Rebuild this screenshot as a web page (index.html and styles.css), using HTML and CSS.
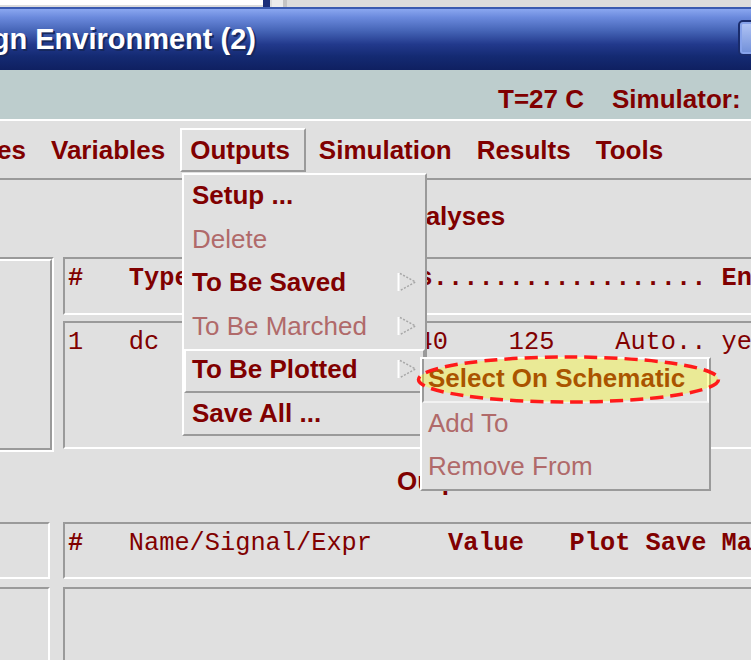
FILE: index.html
```html
<!DOCTYPE html>
<html>
<head>
<meta charset="utf-8">
<link rel="stylesheet" href="styles.css">
</head>
<body>
<div class="screen">
  <div class="topstrip">
    <div class="ts-white"></div>
    <div class="ts-navy"></div>
    <div class="ts-light"></div>
  </div>
  <div class="titlebar">
    <div class="title-wrap"><span class="title">Analog Design Environment (2)</span></div>
    <div class="tbtn"></div>
  </div>
  <div class="status">
    <span>T=27 C</span>
    <span class="sim">Simulator:  spectre</span>
  </div>
  <div class="menubar">
    <div class="mi-clip"><span class="mi">Session  Setup  Analyses</span></div>
    <span class="mi">Variables</span>
    <span class="mi active">Outputs</span>
    <span class="mi">Simulation</span>
    <span class="mi">Results</span>
    <span class="mi">Tools</span>
  </div>
  <div class="content">
    <div class="label label-analyses">Analyses</div>
    <div class="section section-a">
      <div class="side"><div class="side-inner"></div></div>
      <div class="tables">
        <div class="thead mono"><b>#   Type       Arguments.................. Enable</b></div>
        <div class="tbody tbody-a mono">1   dc                -40    125    Auto.. yes</div>
      </div>
    </div>
    <div class="label label-outputs">Outputs</div>
    <div class="section section-b">
      <div class="side-col">
        <div class="side2"></div>
        <div class="side2 side2-b"></div>
      </div>
      <div class="tables">
        <div class="thead thead-b mono"><b>#</b>   Name/Signal/Expr     <b>Value   Plot Save March</b></div>
        <div class="tbody tbody-b mono"></div>
      </div>
    </div>
  </div>

  <div class="dropdown">
    <div class="dd-item"><span class="dd-text">Setup ...</span></div>
    <div class="dd-item disabled"><span class="dd-text">Delete</span></div>
    <div class="dd-item"><span class="dd-text">To Be Saved</span>
      <svg class="arrow" width="20" height="20" viewBox="0 0 20 20"><path d="M1.5 1 V19" stroke="#ffffff" stroke-width="2"/><path d="M3 1.5 L18.5 10 L3 18.5" fill="none" stroke="#a6a6a6" stroke-width="1.5" stroke-dasharray="2 1.6"/></svg>
    </div>
    <div class="dd-item disabled"><span class="dd-text">To Be Marched</span>
      <svg class="arrow" width="20" height="20" viewBox="0 0 20 20"><path d="M1.5 1 V19" stroke="#ffffff" stroke-width="2"/><path d="M3 1.5 L18.5 10 L3 18.5" fill="none" stroke="#a6a6a6" stroke-width="1.5" stroke-dasharray="2 1.6"/></svg>
    </div>
    <div class="dd-item active"><span class="dd-text">To Be Plotted</span>
      <svg class="arrow" width="20" height="20" viewBox="0 0 20 20"><path d="M1.5 1 V19" stroke="#ffffff" stroke-width="2"/><path d="M3 1.5 L18.5 10 L3 18.5" fill="none" stroke="#a6a6a6" stroke-width="1.5" stroke-dasharray="2 1.6"/></svg>
    </div>
    <div class="dd-item"><span class="dd-text">Save All ...</span></div>
  </div>

  <div class="submenu">
    <div class="sm-item active"><span class="dd-text">Select On Schematic</span></div>
    <div class="sm-item disabled"><span class="dd-text">Add To</span></div>
    <div class="sm-item disabled"><span class="dd-text">Remove From</span></div>
  </div>

  <svg class="annot" width="312" height="54" viewBox="0 0 312 54">
    <ellipse cx="154.5" cy="26.5" rx="150" ry="22.5" fill="rgba(255,255,0,0.33)" stroke="#ff1a1a" stroke-width="3.5" stroke-dasharray="13 7"/>
  </svg>
</div>
</body>
</html>
```

FILE: styles.css
```css
html, body {
  margin: 0;
  padding: 0;
}
body {
  width: 751px;
  height: 660px;
  overflow: hidden;
  background: #e0e0e0;
  font-family: "Liberation Sans", Arial, sans-serif;
  color: #800000;
}
.screen {
  position: relative;
  width: 751px;
  height: 660px;
  overflow: hidden;
}

/* top strip */
.topstrip {
  height: 7px;
  display: flex;
  background: #dcdcdc;
}
.ts-white {
  width: 263px;
  height: 5px;
  background: #ffffff;
}
.ts-navy {
  width: 7px;
  height: 7px;
  background: #1c2f7a;
}
.ts-light {
  width: 11px;
  height: 7px;
  margin-left: 2px;
  background: #ececec;
  border-right: 4px solid #c4c4c4;
}

/* title bar */
.titlebar {
  height: 61px;
  border-top: 2px solid #3a5ab0;
  background: linear-gradient(#8aa7f0 0%, #6a89dc 14%, #4564b6 36%, #22398c 58%, #142a72 78%, #0f2061 100%);
  display: flex;
  align-items: center;
  justify-content: space-between;
}
.title-wrap {
  width: 256px;
  display: flex;
  justify-content: flex-end;
  white-space: nowrap;
}
.title {
  color: #ffffff;
  font-weight: bold;
  font-size: 29px;
  line-height: 61px;
  text-shadow: 2px 2px 0 #16285e;
}
.tbtn {
  width: 14px;
  height: 32px;
  margin-right: -5px;
  margin-top: -3px;
  border: 2px solid #1a2c6c;
  border-radius: 5px;
  background: linear-gradient(#b3c6f6, #6f8ed8);
  box-shadow: inset 0 0 0 2px #86a2ea;
}

/* status band */
.status {
  height: 40px;
  padding-top: 9px;
  padding-left: 498px;
  background: #bdcdcd;
  border-bottom: 2px solid #ffffff;
  display: flex;
  gap: 28px;
  white-space: nowrap;
  font-weight: bold;
  font-size: 26px;
  line-height: 40px;
  color: #800000;
}
.sim {
  white-space: pre;
}

/* menu bar */
.menubar {
  height: 57px;
  display: flex;
  align-items: center;
  gap: 5px;
  border-bottom: 2px solid #9a9a9a;
  white-space: nowrap;
}
.mi-clip {
  width: 36px;
  flex: none;
  display: flex;
  justify-content: flex-end;
}
.mi {
  flex: none;
  padding: 0 8px;
  border: 2px solid transparent;
  line-height: 40px;
  font-weight: bold;
  font-size: 26px;
  color: #800000;
  white-space: pre;
}
.mi.active {
  padding-right: 14px;
  margin-right: -2px;
  border-color: #ffffff #9a9a9a #9a9a9a #ffffff;
}

/* content */
.label {
  font-weight: bold;
  font-size: 26px;
  line-height: 30px;
  color: #800000;
  white-space: nowrap;
}
.label-analyses {
  margin-top: 21px;
  padding-left: 391px;
}
.label-outputs {
  margin-top: 14px;
  padding-left: 397px;
}
.section {
  display: grid;
  margin-top: 26px;
}
.section-a {
  grid-template-columns: 54px 1fr;
  column-gap: 9px;
  height: 195px;
}
.section-b {
  grid-template-columns: 50px 1fr;
  column-gap: 13px;
}
.side {
  box-sizing: border-box;
  border-top: 2px solid #9a9a9a;
  border-right: 2px solid #ffffff;
  border-bottom: 2px solid #ffffff;
}
.side-inner {
  height: 100%;
  box-sizing: border-box;
  border-top: 2px solid #ffffff;
  border-right: 2px solid #9a9a9a;
  border-bottom: 2px solid #9a9a9a;
}
.side-col {
  display: flex;
  flex-direction: column;
}
.side2 {
  height: 57px;
  box-sizing: border-box;
  border-top: 2px solid #9a9a9a;
  border-right: 2px solid #ffffff;
  border-bottom: 2px solid #ffffff;
}
.side2-b {
  margin-top: 8px;
  height: 100px;
  border-bottom: none;
}
.tables {
  display: flex;
  flex-direction: column;
  min-width: 0;
}
.mono {
  font-family: "Liberation Mono", "Courier New", monospace;
  font-size: 25.33px;
  line-height: 29px;
  white-space: pre;
  color: #800000;
  overflow: hidden;
}
.thead, .tbody {
  box-sizing: border-box;
  border-top: 2px solid #9a9a9a;
  border-left: 2px solid #9a9a9a;
  border-bottom: 2px solid #ffffff;
  padding: 5px 0 0 3px;
}
.thead {
  height: 58px;
}
.tbody-a {
  margin-top: 6px;
  height: 128px;
}
.thead-b {
  height: 57px;
  padding-top: 5px;
}
.tbody-b {
  margin-top: 8px;
  height: 100px;
  border-bottom: none;
}

/* dropdown menu */
.dropdown {
  position: absolute;
  left: 182px;
  top: 173px;
  width: 245px;
  height: 263px;
  box-sizing: border-box;
  background: #e0e0e0;
  border-top: 2px solid #ffffff;
  border-left: 2px solid #ffffff;
  border-right: 2px solid #9a9a9a;
  border-bottom: 2px solid #9a9a9a;
  z-index: 2;
}
.dd-item, .sm-item {
  height: 43.5px;
  box-sizing: border-box;
  display: flex;
  align-items: center;
  justify-content: space-between;
  padding: 0 8px 3px 8px;
  font-size: 26px;
  font-weight: bold;
  color: #800000;
  white-space: nowrap;
}
.dd-text {
  line-height: 30px;
}
.dd-item.active {
  border-top: 2px solid #ffffff;
  border-left: 2px solid #ffffff;
  border-bottom: 2px solid #9a9a9a;
  border-right: 2px solid #9a9a9a;
  padding-left: 6px;
  padding-right: 6px;
}
.disabled {
  font-weight: normal;
  color: #b06a6a;
}
.arrow {
  flex: none;
  display: block;
}

/* submenu */
.submenu {
  position: absolute;
  left: 420px;
  top: 357px;
  width: 291px;
  height: 134px;
  box-sizing: border-box;
  background: #e0e0e0;
  border-top: 2px solid #ffffff;
  border-left: 2px solid #ffffff;
  border-right: 2px solid #9a9a9a;
  border-bottom: 2px solid #9a9a9a;
  z-index: 3;
}
.sm-item {
  padding-left: 6px;
}
.sm-item.active {
  border-left: 2px solid #9a9a9a;
  border-right: 2px solid #ffffff;
  border-bottom: 2px solid #f2f2f2;
  padding-left: 4px;
}

/* annotation ellipse */
.annot {
  position: absolute;
  left: 414px;
  top: 353px;
  z-index: 4;
}
```
